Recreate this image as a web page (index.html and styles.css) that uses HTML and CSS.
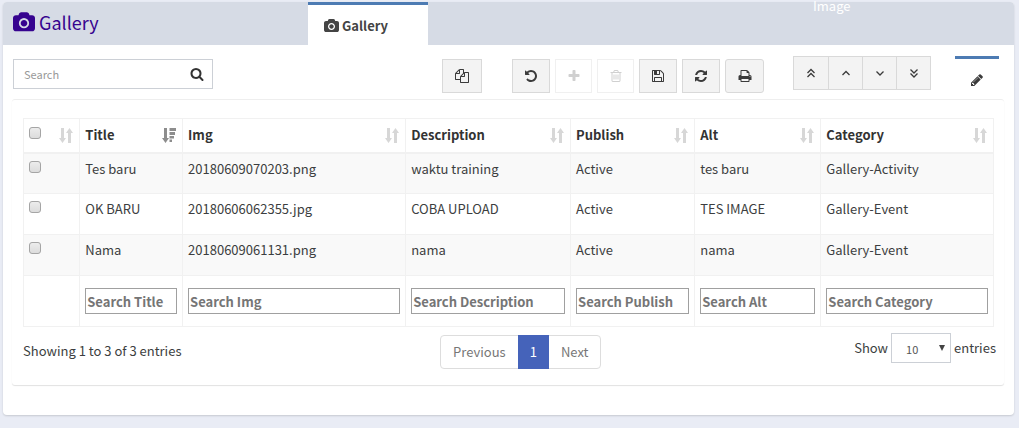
FILE: index.html
```html
<!DOCTYPE html>
<html lang="en">
<head>
<meta charset="utf-8">
<title>Gallery</title>
<link rel="stylesheet" href="styles.css">
</head>
<body>
<svg class="sprite" aria-hidden="true">
  <symbol id="camera" viewBox="-64 0 1920 1792"><path d="M896 672q119 0 203.500 84.500t84.500 203.500-84.500 203.500-203.500 84.500-203.500-84.500-84.500-203.500 84.500-203.500 203.500-84.500zm704-416q106 0 181 75t75 181v896q0 106-75 181t-181 75h-1408q-106 0-181-75t-75-181v-896q0-106 75-181t181-75h224l51-136q19-49 69.500-84.500t103.500-35.500h512q53 0 103.500 35.500t69.500 84.500l51 136h224zm-704 1152q185 0 316.500-131.500t131.500-316.500-131.500-316.500-316.500-131.500-316.500 131.500-131.500 316.500 131.500 316.500 316.500 131.500z"/></symbol>
  <symbol id="search" viewBox="0 0 1792 1792"><path d="M1216 832q0-185-131.500-316.500t-316.500-131.500-316.500 131.500-131.500 316.500 131.500 316.500 316.500 131.500 316.500-131.500 131.500-316.500zm512 832q0 52-38 90t-90 38q-54 0-90-38l-343-342q-179 124-399 124-143 0-273.500-55.500t-225-150-150-225-55.500-273.500 55.500-273.500 150-225 225-150 273.500-55.500 273.500 55.500 225 150 150 225 55.500 273.500q0 220-124 399l343 343q37 37 37 90z"/></symbol>
  <symbol id="copy" viewBox="0 0 1792 1792"><path d="M1696 384q40 0 68 28t28 68v1216q0 40-28 68t-68 28h-960q-40 0-68-28t-28-68v-288h-544q-40 0-68-28t-28-68v-672q0-40 20-88t48-76l408-408q28-28 76-48t88-20h416q40 0 68 28t28 68v328q68-40 128-40h416zm-544 213l-299 299h299v-299zm-640-384l-299 299h299v-299zm196 647l316-316v-416h-384v416q0 40-28 68t-68 28h-416v640h512v-256q0-40 20-88t48-76zm956 804v-1152h-384v416q0 40-28 68t-68 28h-416v640h896z"/></symbol>
  <symbol id="undo" viewBox="0 0 1792 1792"><path d="M1664 896q0 156-61 298t-164 245-245 164-298 61q-172 0-327-72.500t-264-204.500q-7-10-6.500-22.500t8.500-20.500l137-138q10-9 25-9 16 2 23 12 73 95 179 147t225 52q104 0 198.500-40.500t163.500-109.500 109.500-163.500 40.500-198.500-40.500-198.500-109.500-163.500-163.500-109.500-198.500-40.500q-98 0-188 35.500t-160 101.500l137 138q31 30 14 69-17 40-59 40h-448q-26 0-45-19t-19-45v-448q0-42 40-59 39-17 69 14l130 129q107-101 244.500-156.500t284.500-55.500q156 0 298 61t245 164 164 245 61 298z"/></symbol>
  <symbol id="plus" viewBox="0 0 1792 1792"><path d="M1600 736v192q0 40-28 68t-68 28h-416v416q0 40-28 68t-68 28h-192q-40 0-68-28t-28-68v-416h-416q-40 0-68-28t-28-68v-192q0-40 28-68t68-28h416v-416q0-40 28-68t68-28h192q40 0 68 28t28 68v416h416q40 0 68 28t28 68z"/></symbol>
  <symbol id="trash" viewBox="0 0 1792 1792"><path d="M704 736v576q0 14-9 23t-23 9h-64q-14 0-23-9t-9-23v-576q0-14 9-23t23-9h64q14 0 23 9t9 23zm256 0v576q0 14-9 23t-23 9h-64q-14 0-23-9t-9-23v-576q0-14 9-23t23-9h64q14 0 23 9t9 23zm256 0v576q0 14-9 23t-23 9h-64q-14 0-23-9t-9-23v-576q0-14 9-23t23-9h64q14 0 23 9t9 23zm128 724v-948h-896v948q0 22 7 40.500t14.500 27 10.500 8.500h832q3 0 10.500-8.500t14.500-27 7-40.500zm-672-1076h448l-48-117q-7-9-17-11h-317q-10 2-17 11zm928 32v64q0 14-9 23t-23 9h-96v948q0 83-47 143.500t-113 60.500h-832q-66 0-113-58.500t-47-141.500v-952h-96q-14 0-23-9t-9-23v-64q0-14 9-23t23-9h309l70-167q15-37 54-63t79-26h320q40 0 79 26t54 63l70 167h309q14 0 23 9t9 23z"/></symbol>
  <symbol id="save" viewBox="0 0 1792 1792"><path d="M512 1536h768v-384h-768v384zm896 0h128v-896q0-14-10-38.500t-20-34.500l-281-281q-10-10-34-20t-39-10v416q0 40-28 68t-68 28h-576q-40 0-68-28t-28-68v-416h-128v1280h128v-416q0-40 28-68t68-28h832q40 0 68 28t28 68v416zm-384-928v-320q0-13-9.500-22.500t-22.500-9.500h-192q-13 0-22.500 9.500t-9.500 22.500v320q0 13 9.500 22.500t22.500 9.500h192q13 0 22.500-9.500t9.500-22.500zm640 32v928q0 40-28 68t-68 28h-1344q-40 0-68-28t-28-68v-1344q0-40 28-68t68-28h928q40 0 88 20t76 48l280 280q28 28 48 76t20 88z"/></symbol>
  <symbol id="refresh" viewBox="0 0 1792 1792"><path d="M1639 1056q0 5-1 7-64 268-268 434.500t-478 166.500q-146 0-282.500-55t-243.500-157l-129 129q-19 19-45 19t-45-19-19-45v-448q0-26 19-45t45-19h448q26 0 45 19t19 45-19 45l-137 137q71 66 161 102t187 36q134 0 250-65t186-179q11-17 53-117 8-23 30-23h192q13 0 22.500 9.500t9.500 22.500zm25-800v448q0 26-19 45t-45 19h-448q-26 0-45-19t-19-45 19-45l138-138q-148-137-349-137-134 0-250 65t-186 179q-11 17-53 117-8 23-30 23h-199q-13 0-22.500-9.500t-9.500-22.500v-7q65-268 270-434.500t480-166.500q146 0 284 55.500t245 156.500l130-129q19-19 45-19t45 19 19 45z"/></symbol>
  <symbol id="print" viewBox="0 0 1792 1792"><path d="M448 1536h896v-256h-896v256zm0-640h896v-384h-160q-40 0-68-28t-28-68v-160h-640v640zm1152 64q0-26-19-45t-45-19-45 19-19 45 19 45 45 19 45-19 19-45zm128 0v416q0 13-9.500 22.500t-22.500 9.500h-224v160q0 40-28 68t-68 28h-960q-40 0-68-28t-28-68v-160h-224q-13 0-22.500-9.500t-9.500-22.500v-416q0-79 56.500-135.500t135.500-56.500h64v-544q0-40 28-68t68-28h672q40 0 88 20t76 48l152 152q28 28 48 76t20 88v256h64q79 0 135.500 56.500t56.500 135.500z"/></symbol>
  <symbol id="pencil" viewBox="0 0 1792 1792"><path d="M491 1536l91-91-235-235-91 91v107h128v128h107zm523-928q0-22-22-22-10 0-17 7l-542 542q-7 7-7 17 0 22 22 22 10 0 17-7l542-542q7-7 7-17zm-54-192l416 416-832 832h-416v-416zm683 96q0 53-37 90l-166 166-416-416 166-165q36-38 90-38 53 0 91 38l235 234q37 39 37 91z"/></symbol>
  <symbol id="first" viewBox="0 0 14 14"><path class="line" d="M3.500 7L7 3.500 10.500 7M3.500 11L7 7.500 10.500 11"/></symbol>
  <symbol id="up" viewBox="0 0 14 14"><path class="line" d="M3.500 9L7 5.500 10.500 9"/></symbol>
  <symbol id="down" viewBox="0 0 14 14"><path class="line" d="M3.500 5.500L7 9 10.500 5.500"/></symbol>
  <symbol id="last" viewBox="0 0 14 14"><path class="line" d="M3.500 3.500L7 7 10.500 3.500M3.500 7.500L7 11 10.500 7.500"/></symbol>
  <symbol id="sort" viewBox="0 0 14 15"><path d="M2 0h3v10h2l-3.500 5L0 10h2zM9 15h3V5h2L10.500 0 7 5h2z"/></symbol>
  <symbol id="sorted" viewBox="0 0 14 15"><path d="M2 0h3v10h2l-3.500 5L0 10h2zM7.500 0H14v3H7.500zM7.500 4H13v3H7.500zM7.500 8H12v2.500H7.500zM7.500 11.500H10V14H7.500z"/></symbol>
</svg>

<span class="ghost-label">Image</span>

<main class="panel">
  <header class="panel-head">
    <h1 class="title"><svg class="icon-title"><use href="#camera"/></svg>Gallery</h1>
    <a class="tab" href="#list"><svg class="icon-tab"><use href="#camera"/></svg>Gallery</a>
  </header>

  <div class="panel-body">
    <div class="toolbar">
      <form class="search">
        <input class="search-input" type="text" placeholder="Search" aria-label="Search">
        <button class="search-btn" type="button" aria-label="Run search"><svg class="icon"><use href="#search"/></svg></button>
      </form>
      <button class="btn btn-wide" type="button" aria-label="Copy"><svg class="icon"><use href="#copy"/></svg></button>
      <div class="actions">
        <button class="btn" type="button" aria-label="Undo"><svg class="icon"><use href="#undo"/></svg></button>
        <button class="btn" type="button" aria-label="Add" disabled><svg class="icon"><use href="#plus"/></svg></button>
        <button class="btn" type="button" aria-label="Delete" disabled><svg class="icon"><use href="#trash"/></svg></button>
        <button class="btn" type="button" aria-label="Save"><svg class="icon"><use href="#save"/></svg></button>
        <button class="btn" type="button" aria-label="Refresh"><svg class="icon"><use href="#refresh"/></svg></button>
        <button class="btn btn-round" type="button" aria-label="Print"><svg class="icon"><use href="#print"/></svg></button>
      </div>
      <div class="steps">
        <button class="step" type="button" aria-label="First"><svg class="icon"><use href="#first"/></svg></button>
        <button class="step" type="button" aria-label="Previous record"><svg class="icon"><use href="#up"/></svg></button>
        <button class="step" type="button" aria-label="Next record"><svg class="icon"><use href="#down"/></svg></button>
        <button class="step" type="button" aria-label="Last"><svg class="icon"><use href="#last"/></svg></button>
      </div>
      <a class="edit-tab" href="#edit" aria-label="Edit"><svg class="icon"><use href="#pencil"/></svg></a>
    </div>

    <section class="box" id="list">
      <table class="grid">
        <colgroup><col class="c-check"><col class="c-title"><col class="c-img"><col class="c-desc"><col class="c-pub"><col class="c-alt"><col></colgroup>
        <thead>
          <tr>
            <th><div class="head"><input class="check" type="checkbox" aria-label="Select all"><svg class="sort"><use href="#sort"/></svg></div></th>
            <th><div class="head">Title<svg class="sort sort-on"><use href="#sorted"/></svg></div></th>
            <th><div class="head">Img<svg class="sort"><use href="#sort"/></svg></div></th>
            <th><div class="head">Description<svg class="sort"><use href="#sort"/></svg></div></th>
            <th><div class="head">Publish<svg class="sort"><use href="#sort"/></svg></div></th>
            <th><div class="head">Alt<svg class="sort"><use href="#sort"/></svg></div></th>
            <th><div class="head">Category<svg class="sort"><use href="#sort"/></svg></div></th>
          </tr>
        </thead>
        <tbody>
          <tr><td><input class="check" type="checkbox" aria-label="Select Tes baru"></td><td>Tes baru</td><td>20180609070203.png</td><td>waktu training</td><td>Active</td><td>tes baru</td><td>Gallery-Activity</td></tr>
          <tr><td><input class="check" type="checkbox" aria-label="Select OK BARU"></td><td>OK BARU</td><td>20180606062355.jpg</td><td>COBA UPLOAD</td><td>Active</td><td>TES IMAGE</td><td>Gallery-Event</td></tr>
          <tr><td><input class="check" type="checkbox" aria-label="Select Nama"></td><td>Nama</td><td>20180609061131.png</td><td>nama</td><td>Active</td><td>nama</td><td>Gallery-Event</td></tr>
        </tbody>
        <tfoot>
          <tr>
            <td></td>
            <td><input class="filter" type="text" placeholder="Search Title" aria-label="Search Title"></td>
            <td><input class="filter" type="text" placeholder="Search Img" aria-label="Search Img"></td>
            <td><input class="filter" type="text" placeholder="Search Description" aria-label="Search Description"></td>
            <td><input class="filter" type="text" placeholder="Search Publish" aria-label="Search Publish"></td>
            <td><input class="filter" type="text" placeholder="Search Alt" aria-label="Search Alt"></td>
            <td><input class="filter" type="text" placeholder="Search Category" aria-label="Search Category"></td>
          </tr>
        </tfoot>
      </table>

      <div class="table-foot">
        <p class="info">Showing 1 to 3 of 3 entries</p>
        <nav class="pager" aria-label="Pages">
          <a class="page" href="#prev">Previous</a>
          <a class="page page-on" href="#1">1</a>
          <a class="page" href="#next">Next</a>
        </nav>
        <label class="length">Show
          <span class="select-wrap"><select class="select"><option>10</option><option>25</option><option>50</option></select></span>
          entries</label>
      </div>
    </section>
  </div>
</main>
</body>
</html>
```

FILE: styles.css
```css
* { box-sizing: border-box; }

body {
  margin: 0;
  padding: 2px 5px 12px 3px;
  background: #e9ecf5;
  color: #3c3e40;
  font: 13px/20px "Noto Sans CJK SC", "Noto Sans", sans-serif;
}

input, button, select { font: inherit; color: inherit; margin: 0; }
a { color: inherit; text-decoration: none; }
svg { display: block; fill: currentColor; flex: none; }

.sprite { position: absolute; width: 0; height: 0; }
.line { fill: none; stroke: currentColor; stroke-width: 1.3; }

.ghost-label {
  position: absolute;
  top: 0;
  left: 813px;
  color: #fff;
  line-height: 12px;
}

.panel {
  background: #fff;
  border-radius: 4px;
  box-shadow: 0 1px 2px rgba(0, 0, 0, .15);
}

.panel-head {
  display: flex;
  height: 43px;
  background: #d6dbe5;
  border-radius: 4px 4px 0 0;
}

.title {
  display: flex;
  align-items: center;
  gap: 4px;
  width: 305px;
  margin: 0;
  padding: 0 0 3px 10px;
  color: #36038f;
  font-size: 18px;
  font-weight: 400;
}
.icon-title { width: 22px; height: 21px; }

.tab {
  display: flex;
  align-items: center;
  gap: 3px;
  width: 120px;
  padding: 1px 16px 0;
  border-top: 3px solid #4d7bb3;
  background: #fff;
  color: #444;
  font-weight: 700;
}
.icon-tab { width: 15px; height: 14px; }

.panel-body { padding: 11px 10px 30px 9px; }

.toolbar { display: flex; align-items: flex-end; padding: 0 5px 6px 1px; }

.icon { width: 14px; height: 14px; }

.search {
  display: flex;
  align-items: center;
  align-self: flex-start;
  width: 200px;
  height: 30px;
  margin: 3px auto 0 0;
  border: 1px solid #ccd0d6;
}
.search-input {
  flex: 1;
  min-width: 0;
  padding: 0 10px;
  border: 0;
  background: none;
  font-size: 11px;
}
.search-input::placeholder { color: #999; }
.search-btn { padding: 0 8px 0 6px; border: 0; background: none; color: #333; }

.btn {
  display: grid;
  place-items: center;
  width: 38px;
  height: 34px;
  margin-top: 3px;
  padding: 0;
  border: 1px solid #d9d9d9;
  background: #f3f3f3;
  color: #3b3b3b;
}
.btn-wide { width: 40px; margin-right: 30px; }
.btn-round { width: 39px; border-radius: 3px; }
.btn:disabled { width: 37px; border-color: #f0f0f0; background: #fff; color: #d0d0d0; }

.actions { display: flex; gap: 5px; margin-right: 29px; }

.steps { display: flex; align-self: flex-start; margin-right: 24px; border: 1px solid #d9d9d9; }
.step {
  display: grid;
  place-items: center;
  width: 34px;
  height: 32px;
  padding: 0;
  border: 0;
  background: #f3f3f3;
  color: #3b3b3b;
}
.step + .step { border-left: 1px solid #d9d9d9; }

.edit-tab {
  display: grid;
  place-items: center;
  align-self: stretch;
  width: 44px;
  padding-top: 8px;
  border-top: 3px solid #4d7bb3;
  color: #3b3b3b;
}

.box {
  padding: 18px 10px 16px 11px;
  border-top: 1px solid #eee;
  border-radius: 3px;
  box-shadow: 0 1px 1px rgba(0, 0, 0, .12);
}

.grid { width: 100%; border-collapse: collapse; table-layout: fixed; }
.c-check { width: 5.8%; }
.c-title { width: 10.6%; }
.c-img { width: 23%; }
.c-desc { width: 17%; }
.c-pub { width: 12.8%; }
.c-alt { width: 13%; }

.grid th, .grid td { border: 1px solid #f1f1f1; text-align: left; }
.grid th { height: 34px; padding: 0 6px 0 5px; border-bottom: 2px solid #f1f1f1; color: #333; }
.grid td { height: 41px; padding: 5px; vertical-align: top; }
.grid tbody tr:nth-child(odd) { background: #f9f9f9; }
.grid tfoot td { height: 51px; padding: 12px 5px; }

.head { display: flex; align-items: center; justify-content: space-between; }
.sort { width: 14px; height: 15px; color: #d7d7d7; }
.sort-on { color: #8d8d8d; }

.check {
  display: block;
  appearance: none;
  width: 12px;
  height: 12px;
  margin: 2px 0;
  border: 1px solid #a5a5a5;
  border-radius: 3px;
  background: linear-gradient(#ececec, #dcdcdc);
}
.head .check { margin: 0 0 4px; }

.filter {
  display: block;
  width: 100%;
  height: 26px;
  padding: 0 1px;
  border: 1px solid #a0a0a0;
  background: #fff;
  font-weight: 700;
}
.filter::placeholder { color: #757575; }

.table-foot {
  display: grid;
  grid-template-columns: 17fr auto 16fr;
  align-items: start;
  padding-top: 6px;
}
.info { margin: 8px 0 0; }

.pager { display: flex; margin-top: 2px; border: 1px solid #ddd; border-radius: 4px; }
.page { padding: 6px 12px; color: #777; }
.page-on { margin: -1px 0; padding: 7px 12px; background: #4563ba; color: #fff; }

.length { display: flex; justify-content: flex-end; align-items: center; gap: 3px; margin-right: -2px; }
.select-wrap { position: relative; }
.select-wrap::after {
  content: "";
  position: absolute;
  top: 12px;
  right: 6px;
  border: 3px solid transparent;
  border-top: 6px solid #444;
  border-bottom: 0;
  pointer-events: none;
}
.select {
  display: block;
  appearance: none;
  width: 60px;
  height: 30px;
  padding: 2px 14px 0;
  border: 1px solid #ccd0d6;
  border-radius: 0;
  background: #fff;
  color: #555;
  font-size: 11px;
}
```
